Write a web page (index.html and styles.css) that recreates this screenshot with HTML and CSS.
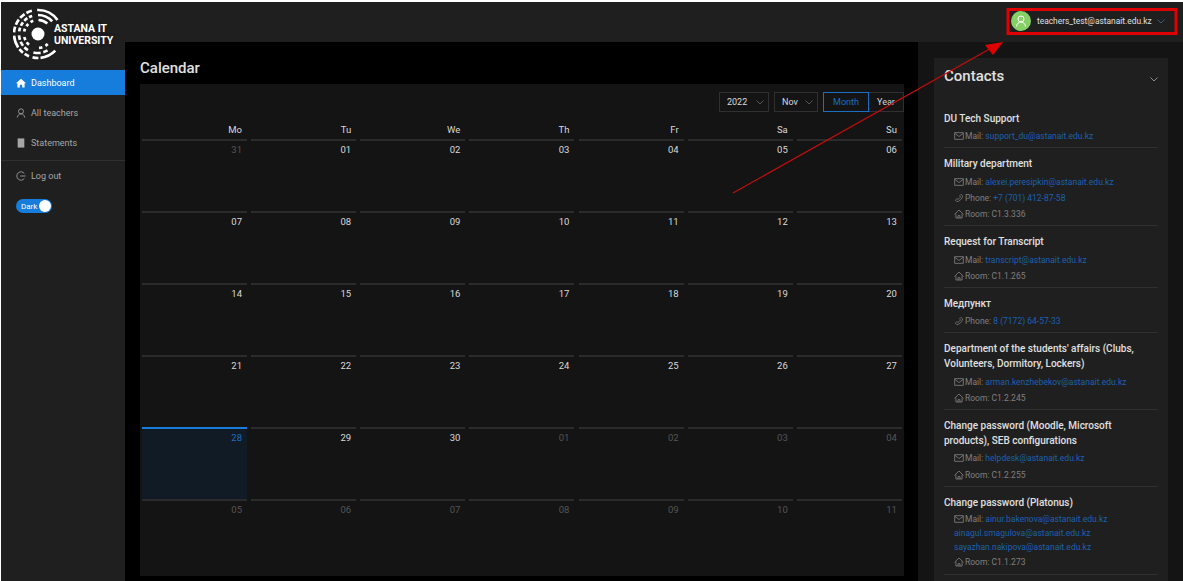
FILE: index.html
```html
<!DOCTYPE html>
<html lang="en">
<head>
    <meta charset="UTF-8">
    <title>Dashboard</title>
    <link rel="stylesheet" href="styles.css">
</head>
<body>
    <svg class="icon-defs" width="0" height="0">
        <symbol id="i-mail" viewBox="0 0 12 12"><path d="M.8 2h10.4v8H.8zM.8 2.600 6 6.600l5.200-4" fill="none" stroke="currentColor"/></symbol>
        <symbol id="i-phone" viewBox="0 0 12 12"><path d="M8.500 1.500 10.500 3.500C10 6.500 7 10 3.500 10.500L1.500 8.500 3.500 6.700 4.800 7.800C6 7 7 6 7.800 4.700L6.700 3.400z" fill="none" stroke="currentColor" stroke-width=".9"/></symbol>
        <symbol id="i-room" viewBox="0 0 12 12"><path d="M.6 6.400 6 1.200l5.400 5.200M2.300 5.500v5.300h7.400V5.500M4.800 10.800V8h2.400v2.800" fill="none" stroke="currentColor"/></symbol>
    </svg>

    <div class="app">
        <aside class="sidebar">
            <div class="logo">
                <svg class="logo-mark" width="50" height="54" viewBox="0 0 50 54">
                    <g fill="none" stroke="#fff" stroke-width="2.700" transform="translate(25 27)">
                        <circle r="6.500" fill="#fff" stroke="none"/>
                        <!-- top right fan -->
                        <circle r="24" pathLength="360" stroke-dasharray="56 360" transform="rotate(-92)"/>
                        <circle r="19" pathLength="360" stroke-dasharray="48 360" transform="rotate(-90)"/>
                        <circle r="14" pathLength="360" stroke-dasharray="40 360" transform="rotate(-88)"/>
                        <!-- upper left fan -->
                        <circle r="24" pathLength="360" stroke-dasharray="14 5 14 5 14 5 14 360" transform="rotate(-176)"/>
                        <circle r="19" pathLength="360" stroke-dasharray="12 6 12 6 12 6 10 360" transform="rotate(-172)"/>
                        <circle r="14" pathLength="360" stroke-dasharray="12 12 12 12 12 360" transform="rotate(-170)"/>
                        <!-- lower left fan -->
                        <circle r="24" pathLength="360" stroke-dasharray="12 5 12 5 30 360" transform="rotate(112)"/>
                        <circle r="19" pathLength="360" stroke-dasharray="14 6 14 6 14 360" transform="rotate(122)"/>
                        <circle r="14" pathLength="360" stroke-dasharray="14 10 14 360" transform="rotate(130)"/>
                        <!-- bottom -->
                        <circle r="24" pathLength="360" stroke-dasharray="40 5 14 360" transform="rotate(44)"/>
                        <circle r="19" pathLength="360" stroke-dasharray="14 8 22 360" transform="rotate(60)"/>
                        <circle r="14" pathLength="360" stroke-dasharray="12 14 14 360" transform="rotate(46)"/>
                    </g>
                </svg>
                <div class="logo-text">ASTANA IT<br>UNIVERSITY</div>
            </div>
            <nav class="nav">
                <a class="nav-item active">
                    <svg width="10" height="10" viewBox="0 0 12 12"><path d="M6 .8 12 6.400h-1.700V11.500H7.400V8H4.600v3.500H1.700V6.400H0z" fill="currentColor"/></svg>
                    Dashboard
                </a>
                <a class="nav-item">
                    <svg width="10" height="10" viewBox="0 0 12 12"><path d="M6 1a3 3 0 1 1 0 6 3 3 0 0 1 0-6zM1.500 11.500C2 8.500 3.800 7 6 7s4 1.500 4.500 4.500" fill="none" stroke="currentColor"/></svg>
                    All teachers
                </a>
                <a class="nav-item">
                    <svg width="10" height="10" viewBox="0 0 12 12"><path d="M2 .5h8v11H2z" fill="currentColor"/></svg>
                    Statements
                </a>
                <div class="nav-divider"></div>
                <a class="nav-item">
                    <svg width="10" height="10" viewBox="0 0 12 12"><path d="M10 3a5 5 0 1 0 0 6M5 6h6.500" fill="none" stroke="currentColor"/></svg>
                    Log out
                </a>
            </nav>
            <div class="theme-switch"><span>Dark</span><i></i></div>
        </aside>

        <div class="right">
            <header class="topbar">
                <div class="user">
                    <div class="avatar">
                        <svg width="12" height="12" viewBox="0 0 12 12"><path d="M6 1a3 3 0 1 1 0 6 3 3 0 0 1 0-6zM1.500 11.500C2 8.500 3.800 7 6 7s4 1.500 4.500 4.500" fill="none" stroke="#fff"/></svg>
                    </div>
                    <span class="user-mail">teachers_test@astanait.edu.kz</span>
                    <svg class="chev chev-user" width="8" height="5" viewBox="0 0 8 5"><path d="M.5.500 4 4 7.500.500" fill="none" stroke="currentColor"/></svg>
                </div>
            </header>

            <div class="body">
                <main class="main">
                    <h1 class="page-title">Calendar</h1>
                    <section class="calendar">
                        <div class="cal-tools">
                            <div class="select sel-year">2022<svg class="chev" width="8" height="5" viewBox="0 0 8 5"><path d="M.5.500 4 4 7.500.500" fill="none" stroke="currentColor"/></svg></div>
                            <div class="select sel-month">Nov<svg class="chev" width="8" height="5" viewBox="0 0 8 5"><path d="M.5.500 4 4 7.500.500" fill="none" stroke="currentColor"/></svg></div>
                            <div class="segment">
                                <span class="seg seg-on">Month</span>
                                <span class="seg">Year</span>
                            </div>
                        </div>
                        <div class="cal-grid">
                            <div class="wd">Mo</div><div class="wd">Tu</div><div class="wd">We</div><div class="wd">Th</div><div class="wd">Fr</div><div class="wd">Sa</div><div class="wd">Su</div>

                            <div class="day off">31</div><div class="day">01</div><div class="day">02</div><div class="day">03</div><div class="day">04</div><div class="day">05</div><div class="day">06</div>
                            <div class="day">07</div><div class="day">08</div><div class="day">09</div><div class="day">10</div><div class="day">11</div><div class="day">12</div><div class="day">13</div>
                            <div class="day">14</div><div class="day">15</div><div class="day">16</div><div class="day">17</div><div class="day">18</div><div class="day">19</div><div class="day">20</div>
                            <div class="day">21</div><div class="day">22</div><div class="day">23</div><div class="day">24</div><div class="day">25</div><div class="day">26</div><div class="day">27</div>
                            <div class="day today">28</div><div class="day">29</div><div class="day">30</div><div class="day off">01</div><div class="day off">02</div><div class="day off">03</div><div class="day off">04</div>
                            <div class="day off">05</div><div class="day off">06</div><div class="day off">07</div><div class="day off">08</div><div class="day off">09</div><div class="day off">10</div><div class="day off">11</div>
                        </div>
                    </section>
                </main>

                <aside class="contacts-panel">
                    <div class="contacts">
                        <div class="contacts-head">
                            <h2>Contacts</h2>
                            <svg class="chev" width="8" height="5" viewBox="0 0 8 5"><path d="M.5.500 4 4 7.500.500" fill="none" stroke="currentColor"/></svg>
                        </div>

                        <div class="contact">
                            <h3>DU Tech Support</h3>
                            <p><svg><use href="#i-mail"/></svg>Mail: <a>support_du@astanait.edu.kz</a></p>
                        </div>
                        <div class="contact">
                            <h3>Military department</h3>
                            <p><svg><use href="#i-mail"/></svg>Mail: <a>alexei.peresipkin@astanait.edu.kz</a></p>
                            <p><svg><use href="#i-phone"/></svg>Phone: <a>+7 (701) 412-87-58</a></p>
                            <p><svg><use href="#i-room"/></svg>Room: C1.3.336</p>
                        </div>
                        <div class="contact">
                            <h3>Request for Transcript</h3>
                            <p><svg><use href="#i-mail"/></svg>Mail: <a>transcript@astanait.edu.kz</a></p>
                            <p><svg><use href="#i-room"/></svg>Room: C1.1.265</p>
                        </div>
                        <div class="contact">
                            <h3>Медпункт</h3>
                            <p><svg><use href="#i-phone"/></svg>Phone: <a>8 (7172) 64-57-33</a></p>
                        </div>
                        <div class="contact">
                            <h3>Department of the students' affairs (Clubs, Volunteers, Dormitory, Lockers)</h3>
                            <p><svg><use href="#i-mail"/></svg>Mail: <a>arman.kenzhebekov@astanait.edu.kz</a></p>
                            <p><svg><use href="#i-room"/></svg>Room: C1.2.245</p>
                        </div>
                        <div class="contact">
                            <h3>Change password (Moodle, Microsoft products), SEB configurations</h3>
                            <p><svg><use href="#i-mail"/></svg>Mail: <a>helpdesk@astanait.edu.kz</a></p>
                            <p><svg><use href="#i-room"/></svg>Room: C1.2.255</p>
                        </div>
                        <div class="contact">
                            <h3>Change password (Platonus)</h3>
                            <p class="tight"><svg><use href="#i-mail"/></svg>Mail: <a>ainur.bakenova@astanait.edu.kz</a></p>
                            <p class="tight"><a>ainagul.smagulova@astanait.edu.kz</a></p>
                            <p class="tight"><a>sayazhan.nakipova@astanait.edu.kz</a></p>
                            <p><svg><use href="#i-room"/></svg>Room: C1.1.273</p>
                        </div>
                    </div>
                </aside>
            </div>
        </div>
    </div>

    <!-- annotation drawn on top of the screenshot -->
    <svg class="markup" width="1183" height="581" viewBox="0 0 1183 581">
        <rect x="1008" y="9.500" width="168" height="24" fill="none" stroke="#e00000" stroke-width="3"/>
        <path d="M733 193 995 46" fill="none" stroke="#c40d0d" stroke-width="1.200"/>
        <path d="M1003 42 985 45 993 55z" fill="#e00000"/>
    </svg>
</body>
</html>
```

FILE: styles.css
```css
* {
    box-sizing: border-box;
}
html, body {
    margin: 0;
    height: 581px;
    overflow: hidden;
}
body {
    position: relative;
    font-family: Roboto, "Noto Sans", sans-serif;
    font-size: 9.5px;
    color: #d9d9d9;
    background-color: #000;
}
.icon-defs {
    position: absolute;
}
.app {
    display: flex;
    height: 581px;
    border-top: 2px solid #fff;
    border-left: 1px solid #fff;
}

/* sidebar */
.sidebar {
    width: 124px;
    flex: none;
    background-color: #1f1f1f;
}
.logo {
    display: flex;
    align-items: center;
    height: 68px;
    padding: 0 0 4px 12px;
}
.logo-mark {
    flex: none;
    margin-right: -9px;
}
.logo-text {
    position: relative;
    font-size: 10.5px;
    font-weight: 700;
    line-height: 12px;
    color: #fff;
    margin-top: 2px;
    white-space: nowrap;
    text-shadow: 0 0 3px #1f1f1f, 0 0 3px #1f1f1f;
}
.nav-item {
    display: flex;
    align-items: center;
    gap: 5px;
    height: 25px;
    margin-bottom: 5px;
    padding-left: 15px;
    font-size: 9px;
    color: #a6a6a6;
}
.nav-item.active {
    background-color: #177ddc;
    color: #fff;
}
.nav-divider {
    height: 1px;
    background-color: #303030;
    margin: 0 0 2px;
}
.theme-switch {
    display: flex;
    align-items: center;
    justify-content: space-between;
    width: 36px;
    height: 14px;
    margin: 11px 0 0 15px;
    padding: 0 1px 0 5px;
    border-radius: 7px;
    background-color: #177ddc;
    color: #fff;
    font-size: 8px;
}
.theme-switch i {
    width: 12px;
    height: 12px;
    border-radius: 50%;
    background-color: #fff;
}

/* top bar */
.right {
    flex: 1;
    min-width: 0;
    display: flex;
    flex-direction: column;
}
.topbar {
    height: 40px;
    flex: none;
    display: flex;
    justify-content: flex-end;
    background-color: #1f1f1f;
}
.user {
    display: flex;
    align-items: center;
    height: 40px;
    padding: 2px 18px 4px 0;
    color: #e0e0e0;
}
.avatar {
    width: 20px;
    height: 20px;
    border-radius: 50%;
    background-color: #87d068;
    display: flex;
    align-items: center;
    justify-content: center;
}
.user-mail {
    width: 115px;
    margin: 0 5px 0 6.500px;
    font-size: 8.400px;
    white-space: nowrap;
}
.chev {
    flex: none;
    color: #8c8c8c;
}
.chev-user {
    color: #3c5a78;
}

/* calendar */
.body {
    flex: 1;
    min-height: 0;
    display: flex;
}
.main {
    flex: 1;
    min-width: 0;
    padding: 0 14px 0 15px;
}
.page-title {
    margin: 0;
    height: 42px;
    padding-top: 16px;
    font-size: 15px;
    line-height: 20px;
    font-weight: 500;
    color: #e0e0e0;
}
.calendar {
    height: 492px;
    padding: 8px 0 0;
    background-color: #141414;
}
.cal-tools {
    display: flex;
    justify-content: flex-end;
    height: 20px;
    gap: 5px;
    font-size: 9px;
}
.select {
    display: flex;
    align-items: center;
    justify-content: space-between;
    padding: 0 4px 0 7px;
    border: 1px solid #303030;
}
.select .chev {
    color: #555;
}
.sel-year {
    width: 50px;
}
.sel-month {
    width: 44px;
}
.segment {
    display: flex;
}
.seg {
    display: flex;
    align-items: center;
    justify-content: center;
    width: 35px;
    border: 1px solid #303030;
    border-left: 0;
}
.seg-on {
    width: 46px;
    color: #1c6ec2;
    border: 1px solid #1c6ec2;
}
.cal-grid {
    display: grid;
    grid-template-columns: repeat(7, 105px);
    column-gap: 4.170px;
    padding: 0 2px;
    grid-template-rows: 26.500px;
    grid-auto-rows: 72px;
}
.wd {
    text-align: right;
    padding: 11px 5px 0 0;
    line-height: 14px;
}
.day {
    border-top: 2px solid #2b2b2b;
    padding: 2.500px 5px 0 0;
    text-align: right;
    line-height: 14px;
}
.off {
    color: #555;
}
.today {
    border-top-color: #177ddc;
    background-color: #111b26;
    color: #1c6ec2;
}

/* contacts */
.contacts-panel {
    width: 265px;
    flex: none;
    padding: 16px 15px 0 16px;
    background-color: #141414;
    overflow: hidden;
}
.contacts {
    height: 600px;
    padding: 0 10px;
    background-color: #1f1f1f;
}
.contacts-head {
    display: flex;
    justify-content: space-between;
    height: 45px;
    padding-top: 9px;
}
.contacts-head h2 {
    margin: 0;
    font-size: 15px;
    line-height: 18px;
    font-weight: 500;
    color: #e0e0e0;
}
.contacts-head .chev {
    margin: 10px 0 0;
}
.contact {
    padding: 8px 0 3px;
    border-bottom: 1px solid #303030;
}
.contact h3 {
    margin: 0 0 2.100px;
    font-size: 10px;
    line-height: 15px;
    font-weight: 500;
    color: #e0e0e0;
}
.contact p {
    display: flex;
    align-items: center;
    margin: 0;
    padding-left: 10px;
    height: 16.300px;
    color: #7f7f7f;
    font-size: 8.500px;
    white-space: pre;
}
.contact p.tight {
    height: 14.100px;
}
.contact p svg {
    width: 10px;
    height: 10px;
    margin-right: 1px;
    flex: none;
}
.contact a {
    color: #1c60b0;
}

/* red markup */
.markup {
    position: absolute;
    left: 0;
    top: 0;
    pointer-events: none;
}
```
